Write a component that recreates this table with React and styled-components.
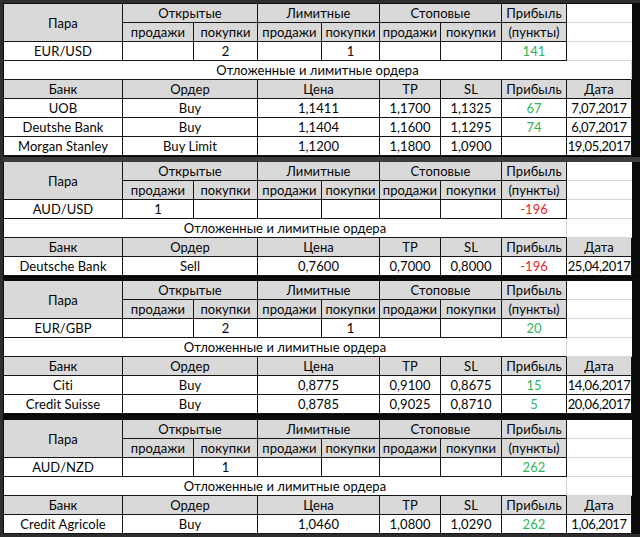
import React from "react";
import styled, { createGlobalStyle } from "styled-components";

const Global = createGlobalStyle`
  html, body { margin: 0; padding: 0; background: #2a2a2a; }
  body { font-family: Lato, "Open Sans", "Liberation Sans", sans-serif; }
`;

const Page = styled.div`
  width: 640px;
  height: 537px;
  box-sizing: border-box;
  padding: 3px 0 3px 3px;
  background: #2e2e2e;
  display: flex;
  flex-direction: column;
  overflow: hidden;
`;

const Block = styled.div`
  display: grid;
  grid-template-columns: 119px 71px 64px 64px 58px 61px 61px 65px 65px;
  grid-auto-rows: 19px;
  border-left: 1px solid #0a0a0a;
  border-top: ${(p) => (p.$first ? "1px solid #0a0a0a" : "0")};
  border-right: 8px solid #0b0b0b;
  background: #fff;
`;

const Divider = styled.div`
  height: ${(p) => p.$h}px;
  background: ${(p) => p.$tone};
  border-top: 1px solid #050505;
  box-sizing: border-box;
`;

const Cell = styled.div`
  grid-column: span ${(p) => p.$span || 1};
  grid-row: span ${(p) => p.$rows || 1};
  box-sizing: border-box;
  display: flex;
  align-items: center;
  justify-content: center;
  padding-top: 1px;
  font-size: 13px;
  line-height: 1;
  white-space: nowrap;
  letter-spacing: ${(p) => (p.$tight ? "-0.35px" : "0.05px")};
  color: ${(p) =>
    p.$tone === "green" ? "#2db45a" : p.$tone === "red" ? "#e8232b" : "#050505"};
  background: ${(p) => (p.$head ? "#d9d9d9" : "#fff")};
  border-right: 1px solid ${(p) => (p.$lightRight ? "#d4d4d4" : "#151515")};
  border-bottom: 1px solid ${(p) => (p.$lightBottom ? "#d4d4d4" : "#151515")};
`;

const BlankCell = styled.div`
  box-sizing: border-box;
  background: #fff;
  border-bottom: 1px solid #d6d6d6;
`;

const blocks = [
  {
    pair: "EUR/USD",
    cells: ["", "2", "", "1", "", ""],
    profit: { v: "141", t: "green" },
    wide: true,
    orders: [
      ["UOB", "Buy", "1,1411", "1,1700", "1,1325", { v: "67", t: "green" }, "7,07,2017"],
      ["Deutshe Bank", "Buy", "1,1404", "1,1600", "1,1295", { v: "74", t: "green" }, "6,07,2017"],
      ["Morgan Stanley", "Buy Limit", "1,1200", "1,1800", "1,0900", { v: "" }, "19,05,2017"],
    ],
  },
  {
    pair: "AUD/USD",
    cells: ["1", "", "", "", "", ""],
    profit: { v: "-196", t: "red" },
    orders: [
      ["Deutsche Bank", "Sell", "0,7600", "0,7000", "0,8000", { v: "-196", t: "red" }, "25,04,2017"],
    ],
  },
  {
    pair: "EUR/GBP",
    cells: ["", "2", "", "1", "", ""],
    profit: { v: "20", t: "green" },
    orders: [
      ["Citi", "Buy", "0,8775", "0,9100", "0,8675", { v: "15", t: "green" }, "14,06,2017"],
      ["Credit Suisse", "Buy", "0,8785", "0,9025", "0,8710", { v: "5", t: "green" }, "20,06,2017"],
    ],
  },
  {
    pair: "AUD/NZD",
    cells: ["", "1", "", "", "", ""],
    profit: { v: "262", t: "green" },
    orders: [
      ["Credit Agricole", "Buy", "1,0460", "1,0800", "1,0290", { v: "262", t: "green" }, "1,06,2017"],
    ],
  },
];

const subHeads = ["продажи", "покупки", "продажи", "покупки", "продажи", "покупки"];

function TradeBlock({ data, first }) {
  return (
    <Block $first={first}>
      <Cell $head $rows={2}>Пара</Cell>
      <Cell $head $span={2}>Открытые</Cell>
      <Cell $head $span={2}>Лимитные</Cell>
      <Cell $head $span={2}>Стоповые</Cell>
      <Cell $head>Прибыль</Cell>
      <BlankCell />
      {subHeads.map((s, i) => (
        <Cell $head key={i}>{s}</Cell>
      ))}
      <Cell $head>(пункты)</Cell>
      <BlankCell />
      <Cell>{data.pair}</Cell>
      {data.cells.map((c, i) => (
        <Cell key={i}>{c}</Cell>
      ))}
      <Cell $tone={data.profit.t}>{data.profit.v}</Cell>
      <BlankCell />
      {data.wide ? (
        <Cell $span={9} $lightRight>Отложенные и лимитные ордера</Cell>
      ) : (
        <>
          <Cell $span={8} $lightRight>Отложенные и лимитные ордера</Cell>
          <BlankCell />
        </>
      )}
      <Cell $head>Банк</Cell>
      <Cell $head $span={2}>Ордер</Cell>
      <Cell $head $span={2}>Цена</Cell>
      <Cell $head>TP</Cell>
      <Cell $head>SL</Cell>
      <Cell $head>Прибыль</Cell>
      <Cell $head>Дата</Cell>
      {data.orders.map((o, i) => (
        <React.Fragment key={i}>
          <Cell>{o[0]}</Cell>
          <Cell $span={2}>{o[1]}</Cell>
          <Cell $span={2}>{o[2]}</Cell>
          <Cell>{o[3]}</Cell>
          <Cell>{o[4]}</Cell>
          <Cell $tone={o[5].t}>{o[5].v}</Cell>
          <Cell $tight>{o[6]}</Cell>
        </React.Fragment>
      ))}
    </Block>
  );
}

export default function App() {
  return (
    <>
      <Global />
      <Page>
        <TradeBlock data={blocks[0]} first />
        <Divider $h={6} $tone="#3c3c3c" />
        <TradeBlock data={blocks[1]} />
        <Divider $h={5} $tone="#0c0c0c" />
        <TradeBlock data={blocks[2]} />
        <Divider $h={6} $tone="#0c0c0c" />
        <TradeBlock data={blocks[3]} />
      </Page>
    </>
  );
}
